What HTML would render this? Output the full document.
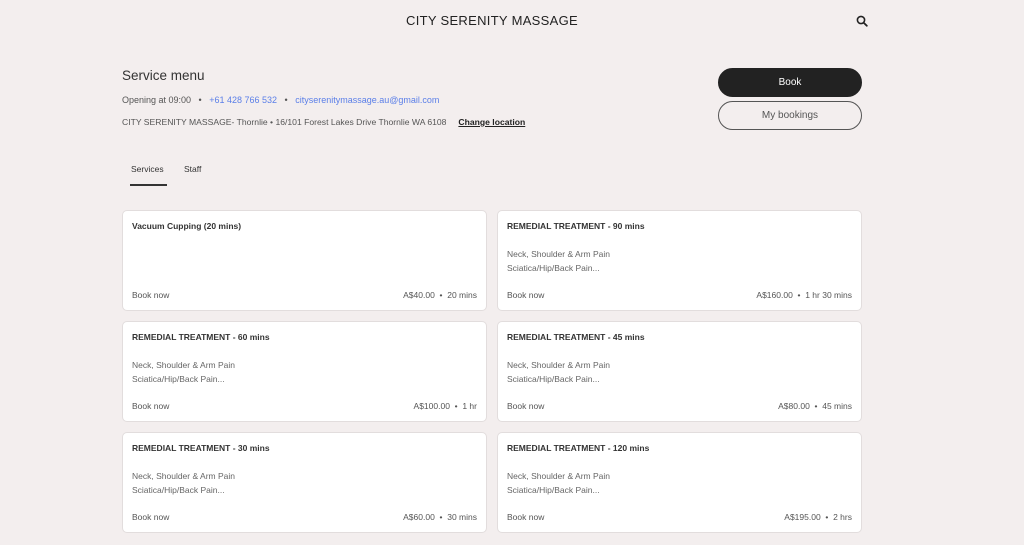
<!DOCTYPE html>
<html><head><meta charset="utf-8"><style>
*{box-sizing:border-box;margin:0;padding:0}
body{width:1024px;height:545px;overflow:hidden;background:#f3eeee;font-family:"Liberation Sans",sans-serif;color:#2b2b2b;position:relative}
.abs{position:absolute}
.title{top:13px;left:0;width:984px;text-align:center;font-size:13px;letter-spacing:.3px;color:#222}
.h{top:68px;left:122px;font-size:13.5px;color:#333}
.info{left:122px;color:#555;white-space:nowrap}
.info a{color:#5b7fe8;text-decoration:none}
.btn{left:718px;width:144px;height:29px;border-radius:15px;text-align:center;font-size:10px;line-height:27px}
.card{background:#fff;border:1px solid #e2dddd;border-radius:5px;width:365px;height:101px}
.card .t{position:absolute;left:9px;top:10px;font-size:8.5px;font-weight:bold;color:#333}
.card .d{position:absolute;left:9px;top:37px;font-size:8.5px;color:#666;line-height:13.5px}
.card .b{position:absolute;left:9px;top:79px;font-size:8.5px;color:#555}
.card .p{position:absolute;right:9px;top:79px;font-size:8.5px;color:#555}
</style></head><body>
<div class="abs title">CITY SERENITY MASSAGE</div>
<svg class="abs" style="left:856px;top:15px" width="12" height="12" viewBox="0 0 12 12"><circle cx="5" cy="5" r="3.6" fill="none" stroke="#222" stroke-width="1.6"/><line x1="7.7" y1="7.7" x2="10.8" y2="10.8" stroke="#222" stroke-width="1.8" stroke-linecap="round"/></svg>
<div class="abs h">Service menu</div>
<div class="abs info" style="top:95px;font-size:9px">Opening at 09:00 &nbsp;&nbsp;•&nbsp;&nbsp; <a>+61 428 766 532</a> &nbsp;&nbsp;•&nbsp;&nbsp; <a>cityserenitymassage.au@gmail.com</a></div>
<div class="abs info" style="top:117px;font-size:8.6px">CITY SERENITY MASSAGE- Thornlie • 16/101 Forest Lakes Drive Thornlie WA 6108 &nbsp;&nbsp;&nbsp;&nbsp;<b style="color:#222;text-decoration:underline">Change location</b></div>
<div class="abs" style="left:131px;top:164px;font-size:8.5px;color:#333">Services</div>
<div class="abs" style="left:130px;top:184px;width:37px;height:1.5px;background:#333"></div>
<div class="abs" style="left:184px;top:164px;font-size:8.5px;color:#333">Staff</div>
<div class="abs btn" style="top:68px;background:#222;color:#fff;border:1px solid #222">Book</div>
<div class="abs btn" style="top:101px;border:1.5px solid #555;color:#555">My bookings</div>

<div class="abs card" style="left:122px;top:210px"><div class="t">Vacuum Cupping (20 mins)</div><div class="b">Book now</div><div class="p">A$40.00 &nbsp;•&nbsp; 20 mins</div></div>
<div class="abs card" style="left:497px;top:210px"><div class="t">REMEDIAL TREATMENT - 90 mins</div><div class="d">Neck, Shoulder &amp; Arm Pain<br>Sciatica/Hip/Back Pain...</div><div class="b">Book now</div><div class="p">A$160.00 &nbsp;•&nbsp; 1 hr 30 mins</div></div>
<div class="abs card" style="left:122px;top:321px"><div class="t">REMEDIAL TREATMENT - 60 mins</div><div class="d">Neck, Shoulder &amp; Arm Pain<br>Sciatica/Hip/Back Pain...</div><div class="b">Book now</div><div class="p">A$100.00 &nbsp;•&nbsp; 1 hr</div></div>
<div class="abs card" style="left:497px;top:321px"><div class="t">REMEDIAL TREATMENT - 45 mins</div><div class="d">Neck, Shoulder &amp; Arm Pain<br>Sciatica/Hip/Back Pain...</div><div class="b">Book now</div><div class="p">A$80.00 &nbsp;•&nbsp; 45 mins</div></div>
<div class="abs card" style="left:122px;top:432px"><div class="t">REMEDIAL TREATMENT - 30 mins</div><div class="d">Neck, Shoulder &amp; Arm Pain<br>Sciatica/Hip/Back Pain...</div><div class="b">Book now</div><div class="p">A$60.00 &nbsp;•&nbsp; 30 mins</div></div>
<div class="abs card" style="left:497px;top:432px"><div class="t">REMEDIAL TREATMENT - 120 mins</div><div class="d">Neck, Shoulder &amp; Arm Pain<br>Sciatica/Hip/Back Pain...</div><div class="b">Book now</div><div class="p">A$195.00 &nbsp;•&nbsp; 2 hrs</div></div>
</body></html>
